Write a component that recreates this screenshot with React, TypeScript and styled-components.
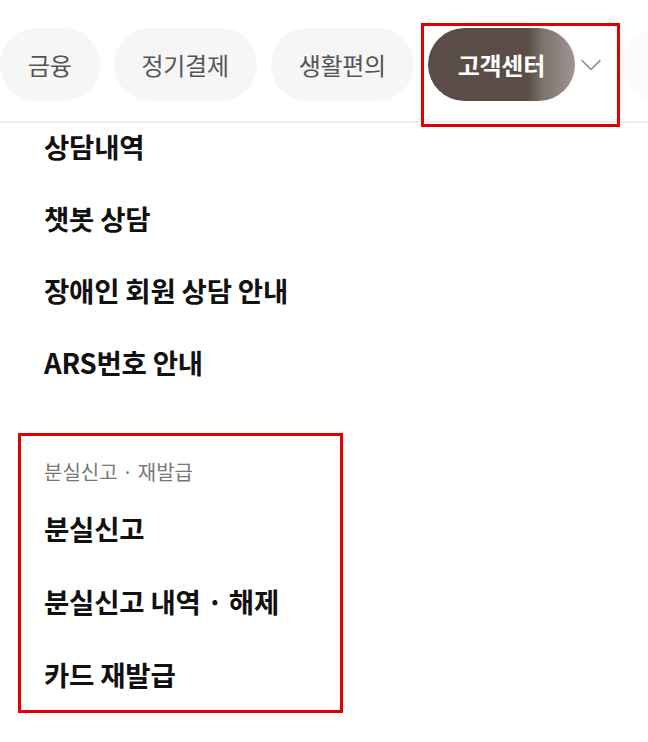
import React from "react";
import styled, { createGlobalStyle } from "styled-components";

const GlobalStyle = createGlobalStyle`
  html, body {
    margin: 0;
    padding: 0;
    background: #ffffff;
  }
  body {
    font-family: "Noto Sans CJK KR", "Noto Sans", sans-serif;
    -webkit-font-smoothing: antialiased;
  }
`;

const Page = styled.div`
  position: relative;
  width: 648px;
  height: 742px;
  overflow: hidden;
  background: #ffffff;
`;

const TabBar = styled.nav`
  display: flex;
  align-items: flex-start;
  gap: 14px;
  height: 123px;
  padding: 28px 0 0 0;
  box-sizing: border-box;
  border-bottom: 2px solid #eeeeee;
  overflow: hidden;
`;

const Tab = styled.button<{ $active?: boolean }>`
  flex: none;
  height: 73px;
  padding: 0 ${({ $active }) => ($active ? 30 : 28)}px;
  border: none;
  border-radius: 37px;
  font-family: inherit;
  font-size: 24px;
  letter-spacing: -0.3px;
  font-weight: ${({ $active }) => ($active ? 700 : 400)};
  color: ${({ $active }) => ($active ? "#ffffff" : "#555555")};
  background: ${({ $active }) =>
    $active
      ? "linear-gradient(90deg, #5a4d48 0%, #5a4d48 68%, #7d716c 78%, #9f9590 100%)"
      : "#f6f6f6"};
  cursor: pointer;
`;

const MoreButton = styled.button`
  flex: none;
  display: flex;
  align-items: center;
  justify-content: center;
  width: 32px;
  height: 73px;
  margin-left: -14px;
  padding: 0;
  border: none;
  background: #ffffff;
  cursor: pointer;
`;

const NextTabEdge = styled.span`
  flex: none;
  width: 80px;
  height: 73px;
  border-radius: 37px;
  background: #fbfbfb;
`;

const MenuList = styled.ul`
  list-style: none;
  margin: 0;
  padding: 5px 0 0 44px;
  display: flex;
  flex-direction: column;
  gap: 36px;
`;

const MenuItem = styled.li`
  font-size: 27.5px;
  line-height: 36px;
  font-weight: 700;
  color: #111111;
  letter-spacing: -0.2px;
`;

const Group = styled.section`
  margin-top: 79px;
  padding-left: 44px;
`;

const GroupTitle = styled.h3`
  margin: 0 0 25px;
  font-size: 20px;
  line-height: 26px;
  font-weight: 400;
  color: #777777;
`;

const GroupList = styled(MenuList)`
  padding: 0;
  gap: 37px;
`;

const Highlight = styled.div<{ $x: number; $y: number; $w: number; $h: number }>`
  position: absolute;
  left: ${({ $x }) => $x}px;
  top: ${({ $y }) => $y}px;
  width: ${({ $w }) => $w}px;
  height: ${({ $h }) => $h}px;
  box-sizing: border-box;
  border: 3px solid #e10000;
  pointer-events: none;
`;

const tabs = ["금융", "정기결제", "생활편의"];
const menu = ["상담내역", "챗봇 상담", "장애인 회원 상담 안내", "ARS번호 안내"];
const lostMenu = ["분실신고", "분실신고 내역 · 해제", "카드 재발급"];

export default function App() {
  return (
    <Page>
      <GlobalStyle />
      <TabBar>
        {tabs.map((t) => (
          <Tab key={t}>{t}</Tab>
        ))}
        <Tab $active>고객센터</Tab>
        <MoreButton aria-label="더보기">
          <svg width="20" height="12" viewBox="0 0 20 12" fill="none">
            <path
              d="M1 1.5 L10 10.5 L19 1.5"
              stroke="#8a8a8a"
              strokeWidth="1.6"
              strokeLinecap="round"
              strokeLinejoin="round"
            />
          </svg>
        </MoreButton>
        <NextTabEdge aria-hidden />
      </TabBar>

      <MenuList>
        {menu.map((m) => (
          <MenuItem key={m}>{m}</MenuItem>
        ))}
      </MenuList>

      <Group>
        <GroupTitle>분실신고 · 재발급</GroupTitle>
        <GroupList>
          {lostMenu.map((m) => (
            <MenuItem key={m}>{m}</MenuItem>
          ))}
        </GroupList>
      </Group>

      <Highlight $x={421} $y={23} $w={199} $h={104} />
      <Highlight $x={18} $y={433} $w={325} $h={280} />
    </Page>
  );
}
